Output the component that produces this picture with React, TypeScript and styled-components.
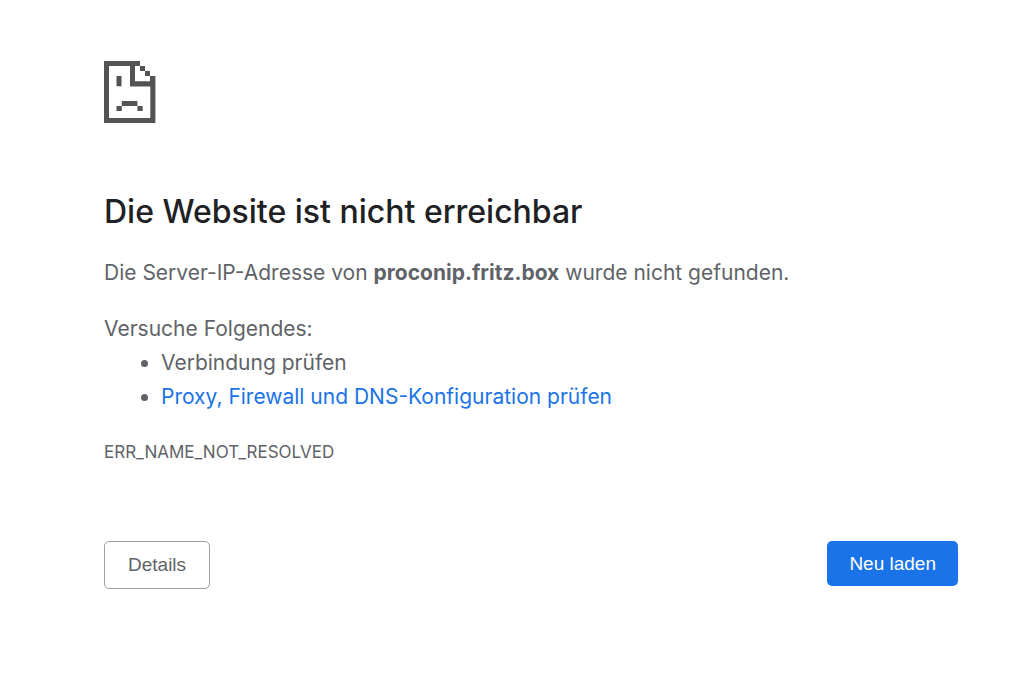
import React from "react";
import styled, { createGlobalStyle } from "styled-components";

const GlobalStyle = createGlobalStyle`
  *, *::before, *::after { box-sizing: border-box; }
  body {
    margin: 0;
    background: #fff;
    color: #5f6368;
    font-family: Inter, "Liberation Sans", sans-serif;
    font-size: 21px;
    line-height: 34px;
  }
`;

const Page = styled.main`
  padding: 61px 66px 64px 104px;
`;

const SadPage = styled.svg`
  display: block;
  width: 52px;
  height: 62px;
  color: #535353;
`;

const Title = styled.h1`
  margin: 69px 0 24px;
  color: #202124;
  font-size: 32px;
  font-weight: 500;
  line-height: 40px;
`;

const Text = styled.p`
  margin: 0;
`;

const Suggestions = styled.section`
  margin-top: 22px;
`;

const List = styled.ul`
  margin: 0;
  padding-left: 57px;
`;

const Link = styled.a`
  color: #1a73e8;
  text-decoration: none;
`;

const ErrorCode = styled.p`
  margin: 21px 0 0;
  font-size: 17px;
`;

const Actions = styled.div`
  display: flex;
  align-items: flex-start;
  justify-content: space-between;
  margin-top: 72px;
`;

const Button = styled.button<{ $primary?: boolean }>`
  height: ${(p) => (p.$primary ? 45 : 48)}px;
  padding: 0 ${(p) => (p.$primary ? 22 : 23)}px;
  border: ${(p) => (p.$primary ? "0" : "1px solid #9aa0a6")};
  border-radius: 5px;
  background: ${(p) => (p.$primary ? "#1a73e8" : "#fff")};
  color: ${(p) => (p.$primary ? "#fff" : "#5f6368")};
  font-family: "Liberation Sans", Arial, sans-serif;
  font-size: 19px;
`;

export default function App() {
  return (
    <>
      <GlobalStyle />
      <Page>
        <SadPage viewBox="0 0 52 62" fill="currentColor" aria-hidden="true">
          <path d="M0 0H36V5H41V10H46V15H51.4V62H0ZM5 5V57H46.3V25.4H26V5ZM31 5V20.3H46V15H41V10H36V5Z" fillRule="evenodd" />
          <path d="M12.5 15h5v10.3h-5zM17.8 40h15.6v5h-15.6zM12.5 45h5.3v5h-5.3zM33.4 45h5.3v5h-5.3z" />
        </SadPage>
        <Title>Die Website ist nicht erreichbar</Title>
        <Text>
          Die Server-IP-Adresse von <strong>proconip.fritz.box</strong> wurde nicht gefunden.
        </Text>
        <Suggestions>
          <Text>Versuche Folgendes:</Text>
          <List>
            <li>Verbindung prüfen</li>
            <li>
              <Link href="#proxy">Proxy, Firewall und DNS-Konfiguration prüfen</Link>
            </li>
          </List>
        </Suggestions>
        <ErrorCode>ERR_NAME_NOT_RESOLVED</ErrorCode>
        <Actions>
          <Button type="button">Details</Button>
          <Button type="button" $primary>
            Neu laden
          </Button>
        </Actions>
      </Page>
    </>
  );
}
